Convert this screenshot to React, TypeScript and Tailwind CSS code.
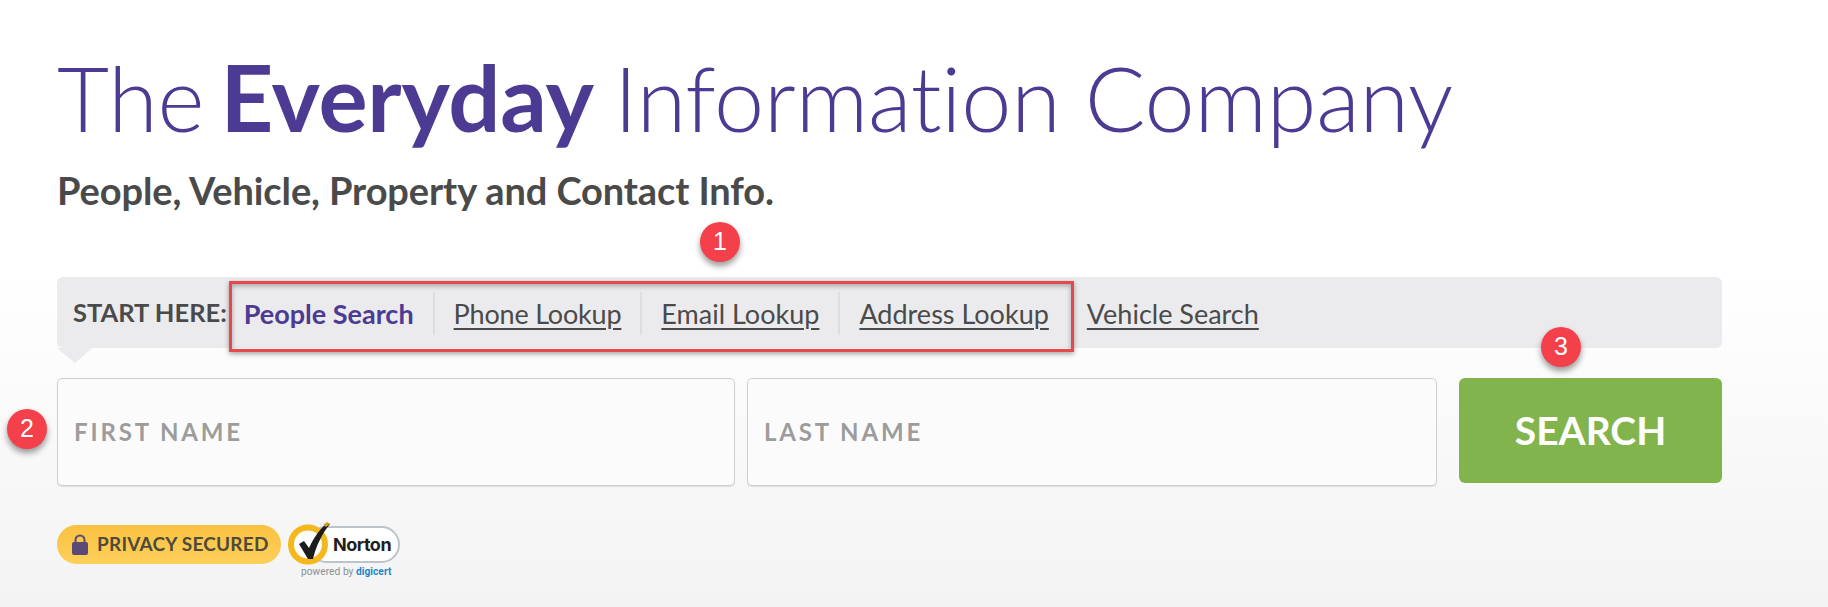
const links = ["Phone Lookup", "Email Lookup", "Address Lookup", "Vehicle Search"];

const Marker = ({ n, className }: { n: number; className: string }) => (
  <div
    className={`absolute w-10 h-10 rounded-full bg-[#f4404a] text-white flex items-center justify-center text-[25px] shadow-[0_4px_6px_rgba(0,0,0,0.4)] font-['Liberation_Sans',sans-serif] ${className}`}
  >
    {n}
  </div>
);

const NortonSeal = () => (
  <div className="relative w-[112px] h-[62px] ml-[7px] -mt-[3px]">
    <div className="absolute left-[20px] top-[4px] w-[92px] h-[37px] rounded-full bg-white border-2 border-[#bcc3cc]"></div>
    <svg className="absolute left-0 top-0" width="46" height="46" viewBox="0 0 46 46">
      <circle cx="20" cy="22.5" r="17" fill="#fff" stroke="#f5b81c" strokeWidth="6" />
      <path d="M11 22l5-3 5 7C25 17 31 8 39 1l3 1C34 12 28 24 25 37h-5z" fill="#1c1c1c" />
      <path d="M35 3l4-3 3 2-4 3z" fill="#c9a227" />
    </svg>
    <span className="absolute left-[45px] top-[9px] text-[18px] leading-[28px] font-bold tracking-[-0.5px] text-[#1e1e1e] font-['Inter',sans-serif]">Norton</span>
    <div className="absolute left-[13px] top-[43px] text-[10.25px] leading-[14px] whitespace-nowrap text-[#8a8f96] font-['Roboto',sans-serif]">
      powered by <span className="font-bold text-[#1f87c9]">digicert</span>
    </div>
  </div>
);

export default function App() {
  return (
    <div className="relative h-[607px] w-[1828px] overflow-hidden bg-gradient-to-b from-white from-45% to-[#f3f3f3] font-['Lato',sans-serif] pl-[57px] pt-[42px]">
      <h1 className="text-[90px] leading-[110px] font-light text-[#4c3a93] tracking-[-0.2px] whitespace-nowrap">
        The <span className="font-bold text-[92px] ml-[-8px] mr-[-4px]">Everyday</span> Information Company
      </h1>
      <p className="mt-[16px] text-[38px] leading-[44px] font-bold text-[#4a4a4a] tracking-[-0.1px]">
        People, Vehicle, Property and Contact Info.
      </p>

      <div className="relative w-[1665px] h-[71px] mt-[65px] bg-[#ebebed] rounded-[6px] flex items-center pl-[16px]">
        <span className="text-[25.5px] font-bold text-[#4a4a4a] whitespace-nowrap -mt-[1px]">START HERE:</span>
        <ul className="flex items-center -ml-[2px] mt-[1px] text-[27px] leading-[43px]">
          <li className="px-[19px] border-r-2 border-[#dedee0] font-bold text-[#4c3a93] whitespace-nowrap">People Search</li>
          {links.map((l, i) => (
            <li key={l} className={`px-[19px] text-[#4a4a4a] underline underline-offset-[4px] decoration-[2px] whitespace-nowrap ${i < 2 ? "border-r-2 border-[#dedee0]" : ""} ${i === 0 ? "tracking-[-0.2px]" : ""}`}>
              {l}
            </li>
          ))}
        </ul>
        <div className="absolute left-0 -bottom-[15px] w-0 h-0 border-l-[18px] border-r-[17px] border-t-[15px] border-l-transparent border-r-transparent border-t-[#ebebed]"></div>
      </div>

      <div className="flex mt-[30px] w-[1665px]">
        <div className="w-[678px] h-[108px] bg-[#fbfbfb] border border-[#cfcfcf] rounded-[5px] shadow-[0_1px_1px_rgba(0,0,0,0.1)] flex items-center pl-[16px] text-[24px] font-bold tracking-[2.85px] text-[#9c9c9c]">
          FIRST NAME
        </div>
        <div className="w-[690px] ml-[12px] h-[108px] bg-[#fbfbfb] border border-[#cfcfcf] rounded-[5px] shadow-[0_1px_1px_rgba(0,0,0,0.1)] flex items-center pl-[16px] text-[24px] font-bold tracking-[2.85px] text-[#9c9c9c]">
          LAST NAME
        </div>
        <button className="w-[263px] h-[105px] ml-[22px] bg-[#81b44c] rounded-[6px] text-white text-[39px] font-bold">
          SEARCH
        </button>
      </div>

      <div className="flex items-start mt-[39px]">
        <div className="w-[224px] h-[39px] rounded-full bg-gradient-to-b from-[#f9c140] to-[#fdd05a] flex items-center pl-[15px]">
          <svg width="16" height="21" viewBox="0 0 16 21" className="shrink-0">
            <path d="M3.5 9V6a4.5 4.5 0 0 1 9 0v3" fill="none" stroke="#5b4a78" strokeWidth="2" />
            <rect x="0" y="8" width="16" height="13" rx="2" fill="#5b4a78" />
          </svg>
          <span className="ml-[9px] text-[19px] font-bold tracking-[0.2px] text-[#4f4a3a] whitespace-nowrap">PRIVACY SECURED</span>
        </div>
        <NortonSeal />
      </div>

      <div className="absolute left-[229px] top-[281px] w-[845px] h-[71px] border-[3px] border-[#e8474c] shadow-[0_2px_5px_rgba(0,0,0,0.35),inset_0_2px_5px_rgba(0,0,0,0.3)]"></div>
      <Marker n={1} className="left-[700px] top-[222px]" />
      <Marker n={2} className="left-[7px] top-[409px]" />
      <Marker n={3} className="left-[1541px] top-[327px]" />
    </div>
  );
}
